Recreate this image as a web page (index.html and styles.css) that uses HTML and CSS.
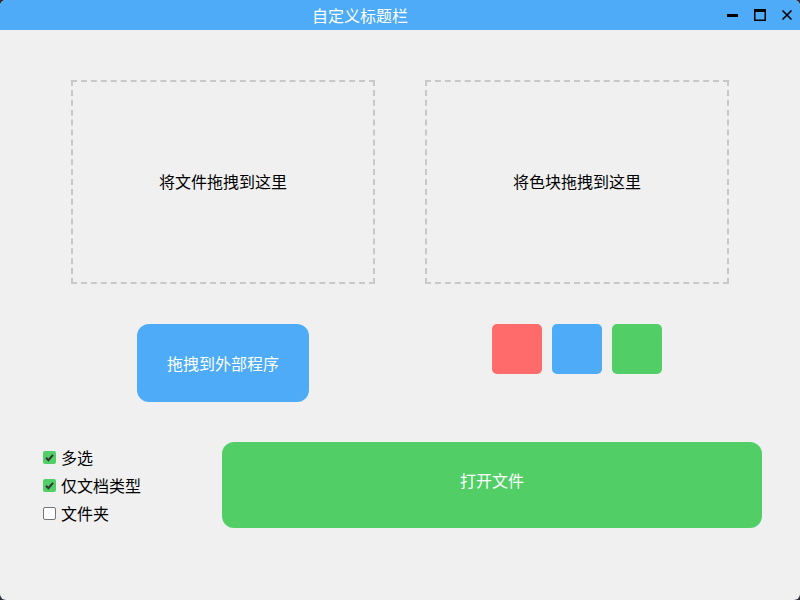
FILE: index.html
```html
<!DOCTYPE html>
<html lang="zh">
<head>
<meta charset="utf-8">
<title>自定义标题栏</title>
<link rel="stylesheet" href="styles.css">
</head>
<body>
<div class="window">
  <header class="titlebar">
    <div class="title">自定义标题栏</div>
    <div class="controls">
      <span class="ctl"><svg width="12" height="12" viewBox="0 0 12 12"><rect x="0" y="5" width="11" height="3" fill="#000"/></svg></span>
      <span class="ctl"><svg width="12" height="12" viewBox="0 0 12 12"><rect x="0.75" y="0.75" width="10.5" height="10.5" fill="none" stroke="#000" stroke-width="1.5"/><rect x="0" y="0" width="12" height="3" fill="#000"/></svg></span>
      <span class="ctl"><svg width="12" height="12" viewBox="0 0 12 12"><path d="M1.5 1.5 L10.5 10.5 M10.5 1.5 L1.5 10.5" stroke="#000" stroke-width="1.6"/></svg></span>
    </div>
  </header>
  <main class="content">
    <div class="row zones">
      <div class="zone">将文件拖拽到这里</div>
      <div class="zone">将色块拖拽到这里</div>
    </div>
    <div class="row actions">
      <div class="col">
        <div class="drag-btn">拖拽到外部程序</div>
      </div>
      <div class="col">
        <div class="swatches">
          <span class="swatch red"></span>
          <span class="swatch blue"></span>
          <span class="swatch green"></span>
        </div>
      </div>
    </div>
    <div class="bottom">
      <div class="options">
        <label class="opt"><span class="box checked"><svg width="13" height="13" viewBox="0 0 13 13"><path d="M3 6.8 L5.4 9.2 L10 3.8" fill="none" stroke="#333" stroke-width="2"/></svg></span>多选</label>
        <label class="opt"><span class="box checked"><svg width="13" height="13" viewBox="0 0 13 13"><path d="M3 6.8 L5.4 9.2 L10 3.8" fill="none" stroke="#333" stroke-width="2"/></svg></span>仅文档类型</label>
        <label class="opt"><span class="box"></span>文件夹</label>
      </div>
      <div class="open-btn">打开文件</div>
    </div>
  </main>
</div>
</body>
</html>
```
FILE: styles.css
```css
html, body {
  margin: 0;
  padding: 0;
  background: #2b2f3a;
}
body {
  font-family: "Noto Sans CJK SC", "Noto Sans", sans-serif;
  font-size: 16px;
  color: #000;
}
.window {
  width: 800px;
  height: 600px;
  background: #f0f0f0;
  border-radius: 6px;
  overflow: hidden;
  display: flex;
  flex-direction: column;
}
.titlebar {
  height: 30px;
  background: #4dabf7;
  display: flex;
  align-items: center;
  flex-shrink: 0;
}
.title {
  width: 720px;
  text-align: center;
  color: #fff;
  font-size: 16px;
  line-height: 30px;
}
.controls {
  flex: 1;
  display: flex;
  align-items: center;
  gap: 15px;
  padding-left: 7px;
}
.ctl {
  display: flex;
  width: 12px;
  height: 12px;
}
.content {
  flex: 1;
  padding-top: 50px;
}
.row {
  display: flex;
  justify-content: center;
  gap: 50px;
}
.zone {
  width: 300px;
  height: 198px;
  padding-bottom: 2px;
  border: 2px dashed #c8c8c8;
  display: flex;
  align-items: center;
  justify-content: center;
}
.actions {
  margin-top: 40px;
  align-items: flex-start;
}
.col {
  width: 304px;
  display: flex;
  justify-content: center;
}
.drag-btn {
  width: 172px;
  height: 78px;
  border-radius: 12px;
  background: #4dabf7;
  color: #fff;
  display: flex;
  align-items: center;
  justify-content: center;
}
.swatches {
  display: flex;
  gap: 10px;
}
.swatch {
  width: 50px;
  height: 50px;
  border-radius: 5px;
}
.red { background: #ff6b6b; }
.blue { background: #4dabf7; }
.green { background: #51cf66; }
.bottom {
  margin-top: 40px;
  display: flex;
  align-items: center;
  padding-left: 43px;
  padding-right: 38px;
}
.options {
  width: 179px;
  display: flex;
  flex-direction: column;
  gap: 4px;
}
.opt {
  display: flex;
  align-items: center;
  gap: 5px;
  height: 24px;
  line-height: 24px;
}
.box {
  width: 11px;
  height: 11px;
  border: 1px solid #767676;
  border-radius: 2px;
  background: #fff;
  display: flex;
  align-items: center;
  justify-content: center;
}
.box.checked {
  width: 13px;
  height: 13px;
  border: 0;
  background: #51cf66;
}
.open-btn {
  flex: 1;
  box-sizing: border-box;
  height: 86px;
  padding-bottom: 10px;
  border-radius: 12px;
  background: #51cf66;
  color: #fff;
  display: flex;
  align-items: center;
  justify-content: center;
}
```
